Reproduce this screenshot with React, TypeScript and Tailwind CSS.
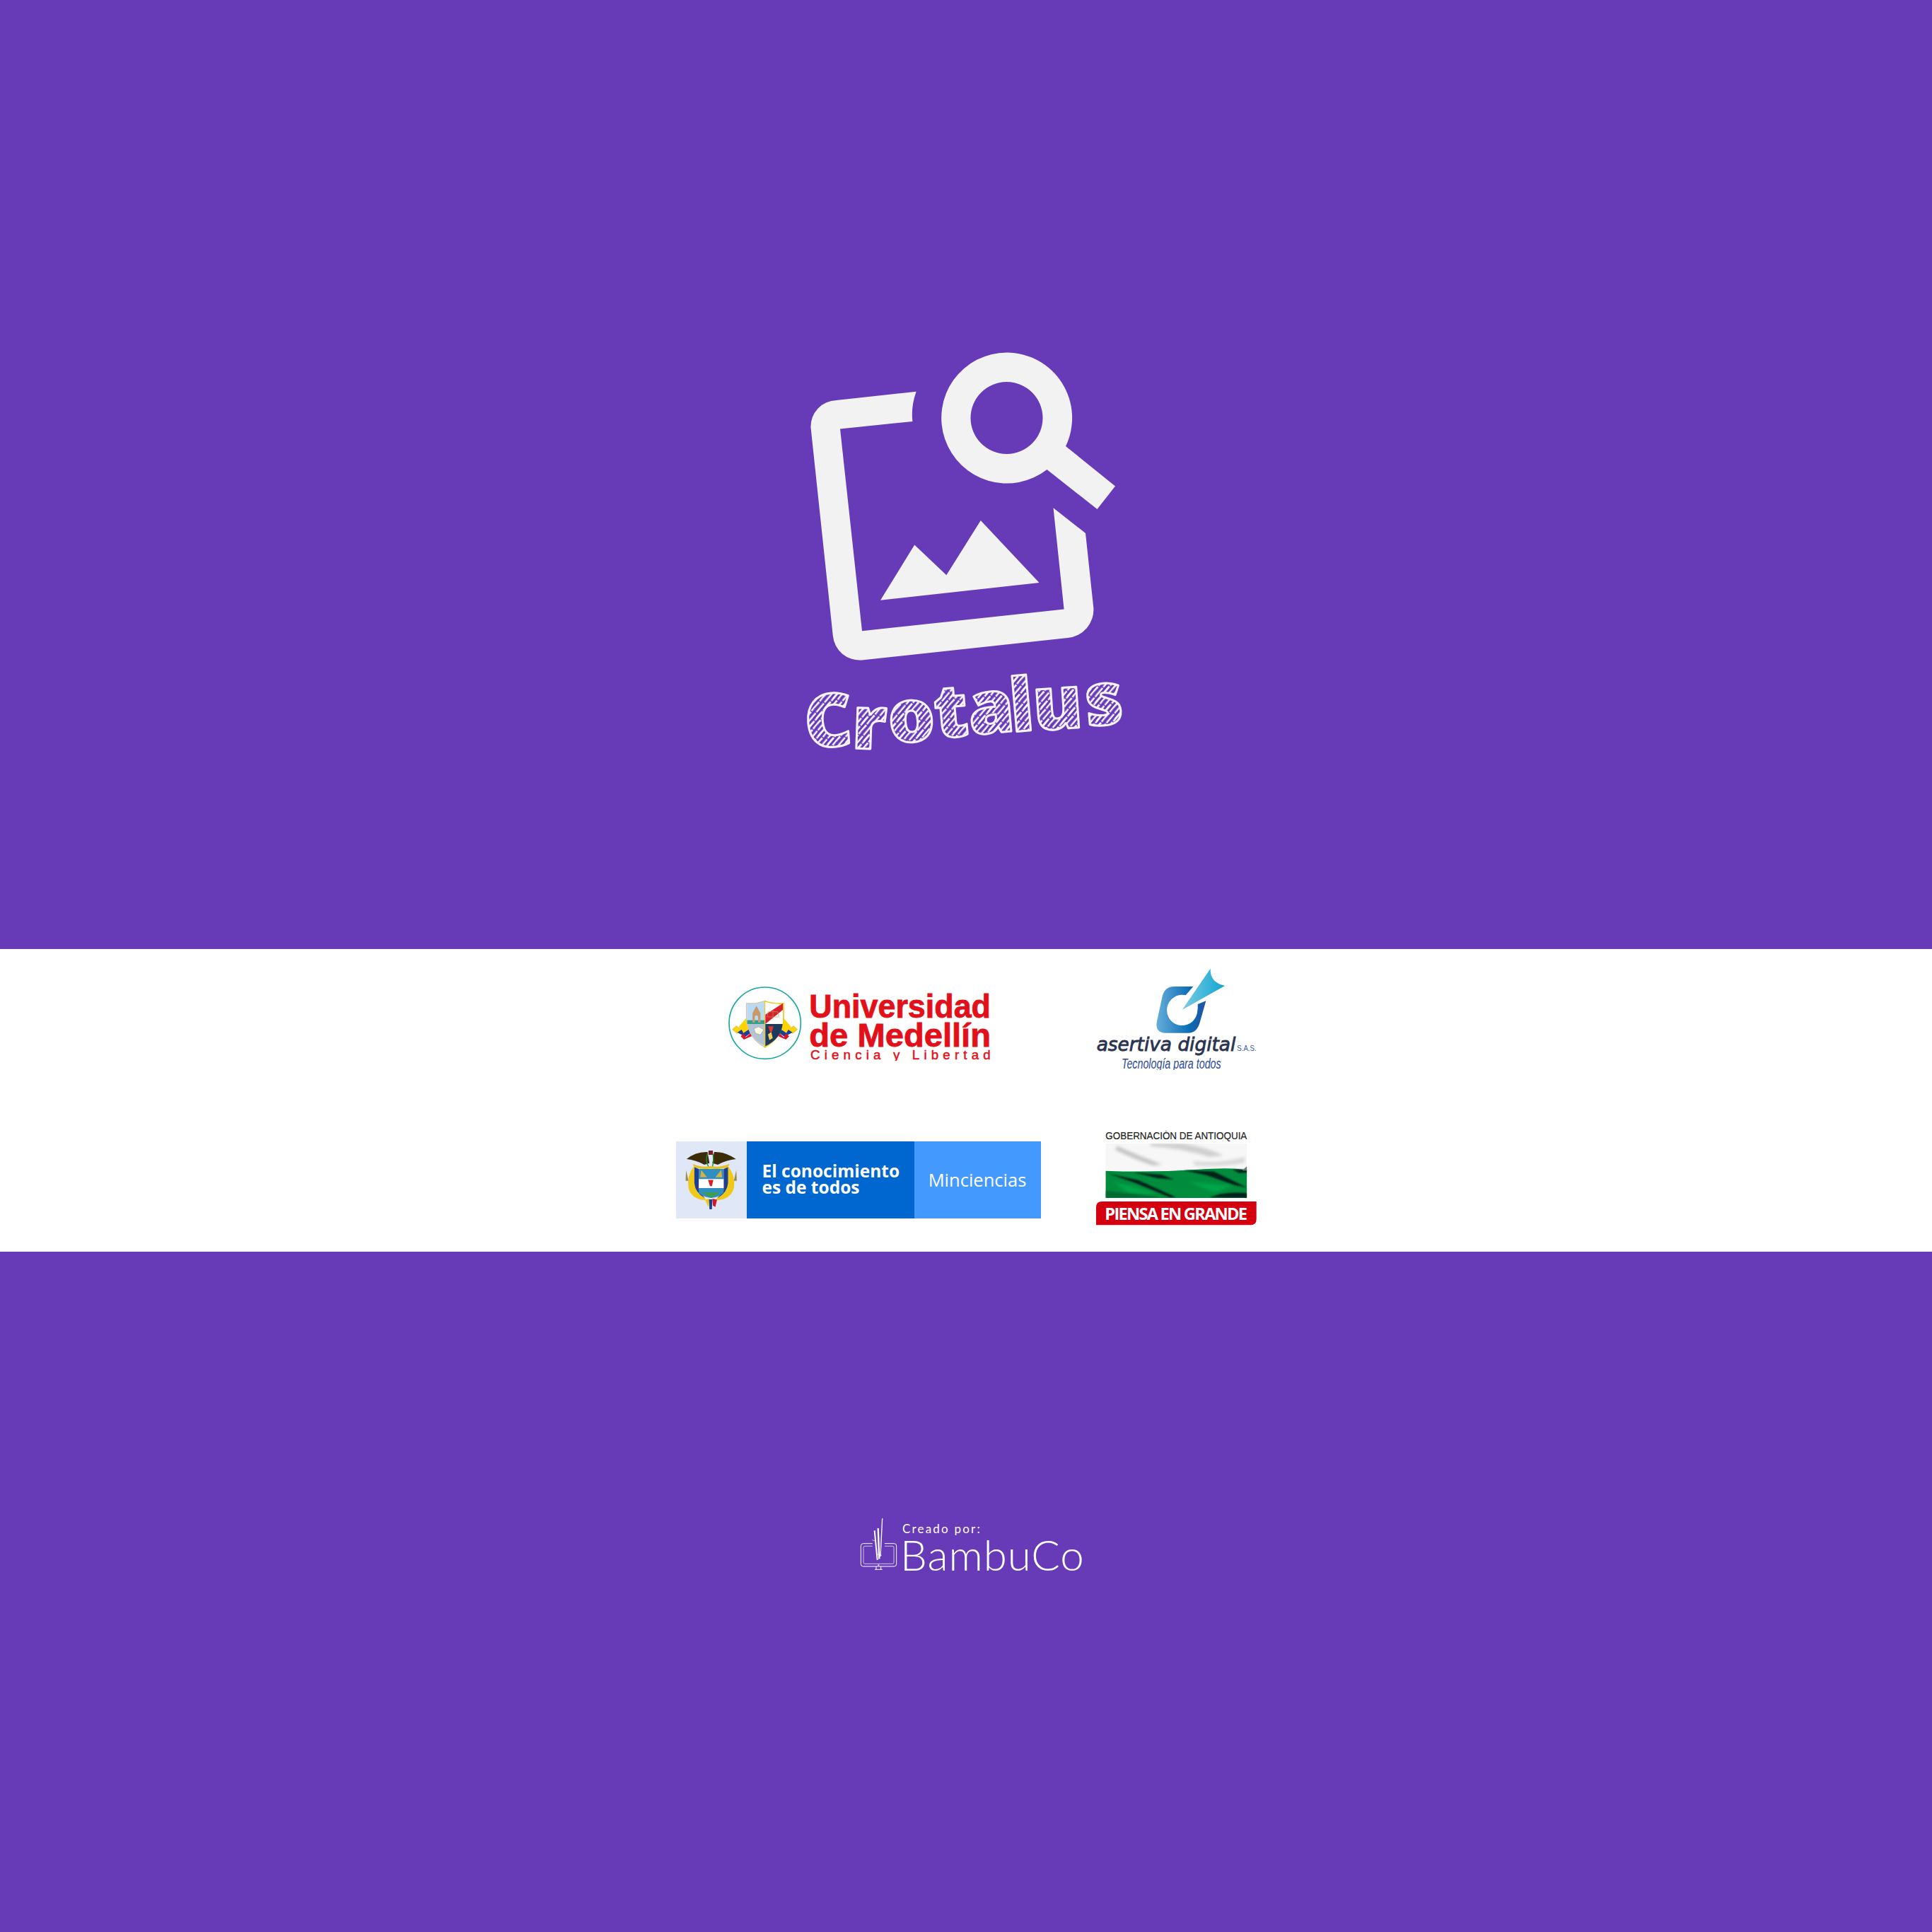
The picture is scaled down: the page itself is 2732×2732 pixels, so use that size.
const CrotalusLogo = () => (
  <svg viewBox="1130 490 472 580" className="h-[580px] w-[472px]">
    <defs>
      <pattern id="hatch" width="18" height="18" patternUnits="userSpaceOnUse" patternTransform="rotate(-50)">
        <rect width="18" height="18" fill="#673ab7" />
        <path fill="#f6f4fa" d="M0 0.5H18V3H0ZM0 6H8L18 6.6V9H0ZM0 12H18V14.8L9 14.2L0 15Z" />
        <path fill="#673ab7" d="M5 0H6.5V3H5ZM13 6H14.5V9H13ZM2 12H3.5V15H2Z" />
      </pattern>
    </defs>
    <path
      fill="#f2f2f2"
      fillRule="evenodd"
      d="M1423.5 498.5a92.5 92.5 0 0 1 83.5 132.5l70 56.5-25.5 32.5-71-56a92.5 92.5 0 1 1-57-165.5Zm0 41.5a51 51 0 1 0 0 102a51 51 0 0 0 0-102Z"
    />
    <path
      fill="#f2f2f2"
      d="M1295.6 553.8L1182.6 566A37 37 0 0 0 1146.5 604.4L1177.8 899A38 38 0 0 0 1218.8 933.4L1509.8 902A40 40 0 0 0 1546.3 859.5L1535 754L1489.5 718.3L1504.6 861.5L1219 892.3L1188 606.4L1290.4 596Q1288 575 1295.6 553.8Z"
    />
    <path fill="#f2f2f2" d="M1245 848.8L1293.2 770.5L1338.3 813.2L1386.8 736L1469.5 824Z" />
    <text
      x="1140 1204 1258 1324 1372 1431 1463 1537"
      y="1058 1058 1051 1044 1039 1035 1033 1027"
      rotate="-4 2 -4 -5 -5 -5 -4 -5"
      fontFamily="'Open Sans', sans-serif"
      fontWeight="800"
      fontSize="104"
      fill="url(#hatch)"
      stroke="#f6f4fa"
      strokeWidth="3"
      strokeLinejoin="round"
    >
      Crotalus
    </text>
  </svg>
);

const MedellinLogo = () => (
  <svg viewBox="88 160 1112 318" className="mt-[25px] ml-[74px] h-[106px] w-[370.67px] self-start">
    <circle cx="243" cy="318" r="152" fill="none" stroke="#1aa8a0" strokeWidth="5" />
    {[false, true].map((flip) => (
      <g key={String(flip)} transform={flip ? "translate(486 0) scale(-1 1)" : undefined}>
        <path fill="#ffd500" stroke="#7a6a10" strokeWidth="1" d="M105 345L122 330L142 346L125 362Z" />
        <path fill="#ffd500" d="M132 334L165 295L182 340L152 360Z" />
        <path fill="#1c3f94" d="M126 358L144 346L152 360L182 340L186 358L160 376Z" />
        <path fill="#d8152a" d="M140 374L154 362L162 378L186 358L190 372L154 388Z" />
      </g>
    ))}
    <path fill="#f6f6f0" stroke="#c9c9c0" strokeWidth="5" d="M165 235Q205 238 243 225V420Q175 385 165 300Z" />
    <path fill="#f6e7a0" stroke="#f0c820" strokeWidth="5" d="M322 235Q280 238 243 225V420Q312 385 322 300Z" />
    <path fill="#b9daf2" d="M168 238Q205 240 241 228V308H168Z" />
    <path fill="#2f9e8c" d="M168 306H241V322H168Z" />
    <path fill="#b3c5d4" d="M170 322H241V414Q178 382 170 322Z" />
    <path fill="#fff" d="M245 229Q282 240 319 238V322H245Z" />
    <path fill="#d8202c" d="M245 282L319 234V262L245 322Z" />
    <path fill="#1b3a5c" d="M245 322H318Q312 384 245 416Z" />
    <path fill="#c89a6a" d="M190 316V276L207 245L224 276V316H214V290Q207 280 200 290V316Z" />
    <path fill="none" stroke="#b89a58" strokeWidth="2" d="M254 292H300M277 262V302M257 270H297M257 270L252 292M297 270L302 292" />
    <path fill="#fffbe8" stroke="#8a9298" strokeWidth="1.5" d="M196 342L216 334L238 346L224 368L204 362Z" />
    <path fill="#e4342c" d="M257 332H279L273 356H264Z" />
    <path fill="#f4ce5a" d="M256 366L270 356L276 382L262 390Z" />
    <g fontFamily="'Liberation Sans', Arial, sans-serif" fontWeight="700" fill="#e1101a">
      <g stroke="#e1101a" strokeWidth="2.5">
        <text x="431" y="295" fontSize="136" textLength="770" lengthAdjust="spacingAndGlyphs">
          Universidad
        </text>
        <text x="431" y="418" fontSize="136" textLength="770" lengthAdjust="spacingAndGlyphs">
          de Medellín
        </text>
      </g>
      <text x="436" y="473" fontSize="56" fontWeight="400" stroke="#e1101a" strokeWidth="1.5" textLength="764">
        Ciencia y Libertad
      </text>
    </g>
  </svg>
);

const AsertivaLogo = () => (
  <svg viewBox="90 85 690 432" className="mx-auto h-[144px] w-[230px]">
    <defs>
      <linearGradient id="ring" x1="0" x2="1" y1="0" y2="0">
        <stop offset="0" stopColor="#66aedb" />
        <stop offset="0.68" stopColor="#0a6bb4" />
        <stop offset="1" stopColor="#2253a0" />
      </linearGradient>
      <linearGradient id="dart" x1="0" x2="1" y1="0" y2="0">
        <stop offset="0" stopColor="#7ecbe2" />
        <stop offset="1" stopColor="#0ea5d2" />
      </linearGradient>
    </defs>
    <path
      fill="url(#ring)"
      d="M502 163L420 163Q385 163 372 200L348 310Q338 360 385 360L480 360Q518 360 530 315L556 224L521 238Q522 252 520 265A65 65 0 1 1 470 200Z"
    />
    <path fill="url(#dart)" d="M455 262L575 87Q572 145 636 160Z" />
    <text
      x="92"
      y="437"
      fontFamily="'DejaVu Sans', sans-serif"
      fontStyle="italic"
      fontSize="80"
      fill="#2a3350"
      stroke="#2a3350"
      strokeWidth="2.5"
      textLength="590"
      lengthAdjust="spacingAndGlyphs"
    >
      asertiva digital
    </text>
    <text x="688" y="437" fontFamily="'Liberation Sans', Arial, sans-serif" fontSize="34" fill="#3a5a9a" textLength="82" lengthAdjust="spacingAndGlyphs">
      S.A.S.
    </text>
    <text
      x="198"
      y="510"
      fontFamily="'Liberation Sans', Arial, sans-serif"
      fontStyle="italic"
      fontSize="58"
      fill="#2a4a96"
      textLength="422"
      lengthAdjust="spacingAndGlyphs"
    >
      Tecnología para todos
    </text>
  </svg>
);

const Crest = () => (
  <svg viewBox="75 172 235 248" preserveAspectRatio="none" className="h-[83px] w-[81px]">
    <path fill="#3d2c0a" d="M92 208Q130 176 178 178L186 225L165 232Q130 212 92 208Z" />
    <path fill="#3d2c0a" d="M295 208Q250 176 205 178L198 225L220 232Q255 212 295 208Z" />
    <path fill="#7a1a2a" d="M182 172h18v18h-18Z" />
    <path fill="none" stroke="#2c8a3c" strokeWidth="4" d="M178 185Q168 215 182 240M200 185Q205 215 198 240" />
    <path fill="#e8c020" d="M118 228Q150 245 190 238Q232 245 268 228L262 244Q225 252 190 248Q155 252 124 244Z" />
    <path fill="#f0c818" d="M122 238Q92 280 100 330Q112 378 170 382L166 368Q128 355 128 310Z" />
    <path fill="#f0c818" d="M262 238Q294 280 286 330Q274 378 214 382L218 368Q258 355 258 310Z" />
    <path fill="#1c3f94" d="M124 242L142 250V340L166 372Q128 350 124 310Z" />
    <path fill="#1c3f94" d="M262 242L244 250V340L220 372Q258 350 262 310Z" />
    <path fill="#cc1a2a" d="M134 310L145 340L165 368L150 345Z" />
    <path fill="#cc1a2a" d="M252 310L241 340L221 368L236 345Z" />
    <path fill="#9a8c50" d="M90 255L100 300H88Z" />
    <path fill="#9a8c50" d="M296 255L286 300H298Z" />
    <path fill="#2f8fc0" d="M142 250H244V350Q230 368 193 372Q156 368 142 350Z" />
    <path fill="#d8b040" d="M152 254L176 285H148Z" />
    <path fill="#d8b040" d="M234 254L210 285H238Z" />
    <path fill="#fff" d="M142 292H244V330H142Z" />
    <path fill="#d8202c" d="M180 296H202L196 322H188Z" />
    <path fill="#3aa050" d="M156 348H230L193 372Z" />
    <path fill="#f0c818" d="M168 380L186 375L182 412Z" />
    <path fill="#cc1a2a" d="M198 375L217 380L210 410L200 404Z" />
    <path fill="#1c3f94" d="M184 378H198L196 420H186Z" />
  </svg>
);

const MincienciasBanner = () => (
  <div className="mt-[15px] flex h-[109px] w-[516px] self-start font-['Open_Sans',sans-serif] text-white">
    <div className="flex w-[100px] items-center justify-center bg-[#e0e8f8]">
      <Crest />
    </div>
    <div className="flex w-[237px] flex-col justify-center bg-[#0066d0] pb-[3px] pl-[22px] text-[24.5px] leading-[23px] font-bold">
      <span>El conocimiento</span>
      <span>es de todos</span>
    </div>
    <div className="flex flex-1 items-center justify-center bg-[#4499ff] text-[25.5px]">Minciencias</div>
  </div>
);

const AntioquiaLogo = () => (
  <svg viewBox="60 85 681 402" className="h-[134px] w-[227px]">
    <defs>
      <clipPath id="flagClip">
        <rect x="100" y="138" width="600" height="232" />
      </clipPath>
      <filter id="soft" x="-20%" y="-80%" width="140%" height="260%">
        <feGaussianBlur stdDeviation="7" />
      </filter>
      <filter id="softer" x="-20%" y="-80%" width="140%" height="260%">
        <feGaussianBlur stdDeviation="3.5" />
      </filter>
    </defs>
    <text
      x="100"
      y="120"
      fontFamily="'Liberation Sans', Arial, sans-serif"
      fontSize="45"
      fill="#222"
      stroke="#222"
      strokeWidth="0.6"
      textLength="600"
      lengthAdjust="spacingAndGlyphs"
    >
      GOBERNACIÓN DE ANTIOQUIA
    </text>
    <g clipPath="url(#flagClip)">
      <rect x="100" y="138" width="600" height="117" fill="#f7f7f7" />
      <g filter="url(#soft)" fill="#c4c4c4">
        <path d="M150 150Q240 190 340 228L300 232Q210 200 140 165Z" />
        <path d="M290 138H420Q520 150 600 190L540 196Q430 160 290 150Z" fill="#d0d0d0" />
        <path d="M470 215Q600 225 690 195V220Q600 240 480 232Z" fill="#d8d8d8" />
      </g>
      <path fill="#008c3c" d="M100 255Q300 262 480 250T700 255V370H100Z" />
      <g filter="url(#soft)" fill="#00a84a">
        <path d="M130 300L320 350L200 350Z" />
        <path d="M450 300L640 320L560 345Z" />
      </g>
      <g filter="url(#softer)" fill="#04231a">
        <path d="M110 266L240 295L400 368H375L230 308Z" />
        <path d="M430 252L560 258L700 326L650 316L530 274Z" />
        <path d="M220 262L340 272L390 292L320 286Z" />
        <path d="M540 368Q610 340 700 350V370Z" />
        <path d="M100 340Q220 350 340 370H100Z" fill="#056a32" />
        <path d="M640 250H700V262L665 264Z" />
      </g>
      <path fill="#777" d="M680 254L700 235V254Z" />
    </g>
    <path fill="#d40010" d="M85 385H740V460Q740 485 715 485H60V410Q60 385 85 385Z" />
    <text x="97" y="462" fontFamily="'Open Sans', sans-serif" fontWeight="700" fontSize="71" fill="#fff" textLength="605">
      PIENSA EN GRANDE
    </text>
  </svg>
);

const BambuIcon = () => (
  <svg viewBox="70 45 165 225" className="h-[75px] w-[55px] shrink-0">
    <rect x="77" y="155" width="151" height="97" rx="10" fill="none" stroke="#fff" strokeWidth="3" />
    <rect x="88" y="166" width="129" height="75" rx="6" fill="none" stroke="#e6ddf5" strokeWidth="2.5" />
    <path fill="#673ab7" d="M126 150H178V224H126Z" />
    <path stroke="#fff" strokeWidth="6" fill="none" d="M135 100L147 225" />
    <path stroke="#fff" strokeWidth="7" fill="none" d="M150 90L155 220" />
    <path stroke="#fff" strokeWidth="4" fill="none" d="M168 48L160 210" />
    <path stroke="#fff" strokeWidth="2" fill="none" d="M125 140L140 145M145 200L165 205" />
    <circle cx="152" cy="247" r="3" fill="#fff" />
    <path stroke="#fff" strokeWidth="3" fill="none" d="M136 265H168M142 252V265M162 252V265" />
  </svg>
);

const BambuCredit = () => (
  <div className="ml-[14px] flex w-[316px] items-end gap-[6px] text-white">
    <BambuIcon />
    <div className="flex flex-col font-['Lato',sans-serif]">
      <span className="text-[17px] leading-[19px] tracking-[2.2px]">Creado por:</span>
      <span className="-mb-[3.5px] -ml-[3px] text-[60px] leading-[54px] font-light tracking-[1px]">BambuCo</span>
    </div>
  </div>
);

export default function App() {
  return (
    <div className="flex h-[2732px] flex-col bg-[#673ab7]">
      <header className="flex h-[1342px] justify-center pt-[490px]">
        <CrotalusLogo />
      </header>
      <section className="flex h-[428px] justify-center bg-white pt-[27px]">
        <div className="grid grid-cols-[516px_227px] grid-rows-[143px_134px] gap-x-[78px] gap-y-[87px]">
          <MedellinLogo />
          <AsertivaLogo />
          <MincienciasBanner />
          <AntioquiaLogo />
        </div>
      </section>
      <footer className="flex justify-center pt-[376px]">
        <BambuCredit />
      </footer>
    </div>
  );
}
